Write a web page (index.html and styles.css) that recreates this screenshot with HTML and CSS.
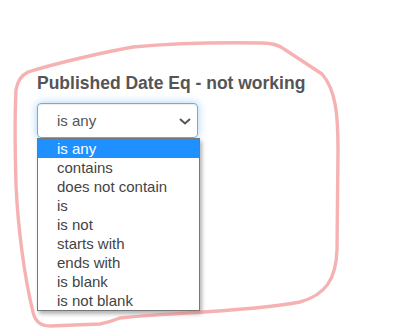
FILE: index.html
```html
<!DOCTYPE html>
<html>
<head>
<meta charset="utf-8">
<link rel="stylesheet" href="styles.css">
</head>
<body>
<div class="page">
  <div class="field">
    <h3 class="label">Published Date Eq - not working</h3>
    <div class="select-wrap">
      <div class="select">
        <span class="value">is any</span>
        <svg class="chev" width="12" height="7" viewBox="0 0 12 7"><path d="M1 1 L6 5.5 L11 1" fill="none" stroke="#555" stroke-width="2"/></svg>
      </div>
      <ul class="menu">
        <li class="opt active">is any</li>
        <li class="opt">contains</li>
        <li class="opt">does not contain</li>
        <li class="opt">is</li>
        <li class="opt">is not</li>
        <li class="opt">starts with</li>
        <li class="opt">ends with</li>
        <li class="opt">is blank</li>
        <li class="opt">is not blank</li>
      </ul>
    </div>
  </div>
  <svg class="doodle" width="403" height="336" viewBox="0 0 403 336">
    <path d="M133 47 C110 51 60 62 28 72 Q18 77 16 90 C15 110 15 150 16 185 C18 230 25 280 33 312 Q36 326 50 326 L100 324 Q110 322 120 318 C160 313 250 312 300 302 C325 295 336 280 337 250 L338 150 C338 115 336 90 322 74 L284 49 Q276 43 262 43 C200 42 165 44 133 47 Z" fill="none" stroke="rgba(238,115,115,0.55)" stroke-width="3.4" stroke-linejoin="round"/>
  </svg>
</div>
</body>
</html>
```

FILE: styles.css
```css
html, body {
  margin: 0;
  padding: 0;
  background: #fff;
}
.page {
  position: relative;
  width: 403px;
  height: 336px;
  overflow: hidden;
  font-family: "Liberation Sans", Arial, sans-serif;
}
.field {
  padding: 72px 0 0 37px;
}
.label {
  margin: 0;
  font-size: 17.5px;
  line-height: 22px;
  font-weight: bold;
  color: #555;
}
.select-wrap {
  position: relative;
  margin-top: 9px;
  width: 161px;
}
.select {
  box-sizing: border-box;
  height: 35px;
  border: 1px solid #66afe9;
  border-radius: 4px;
  box-shadow: inset 0 1px 1px rgba(0,0,0,.075), 0 0 8px rgba(102,175,233,.6);
  display: flex;
  align-items: center;
  justify-content: space-between;
  padding: 0 6px 0 19px;
  font-size: 15px;
  color: #555;
}
.chev {
  display: block;
  margin-top: 1px;
}
.menu {
  position: absolute;
  left: 0;
  top: 35px;
  width: 163px;
  box-sizing: border-box;
  margin: 0;
  padding: 0;
  list-style: none;
  background: #fff;
  border: 1px solid #777;
  box-shadow: 2px 3px 4px rgba(0,0,0,.3);
}
.opt {
  height: 19px;
  line-height: 19px;
  padding-left: 19px;
  font-size: 15px;
  color: #444;
}
.opt.active {
  background: #1e90ff;
  color: #fff;
}
.doodle {
  position: absolute;
  left: 0;
  top: 0;
  pointer-events: none;
}
```
